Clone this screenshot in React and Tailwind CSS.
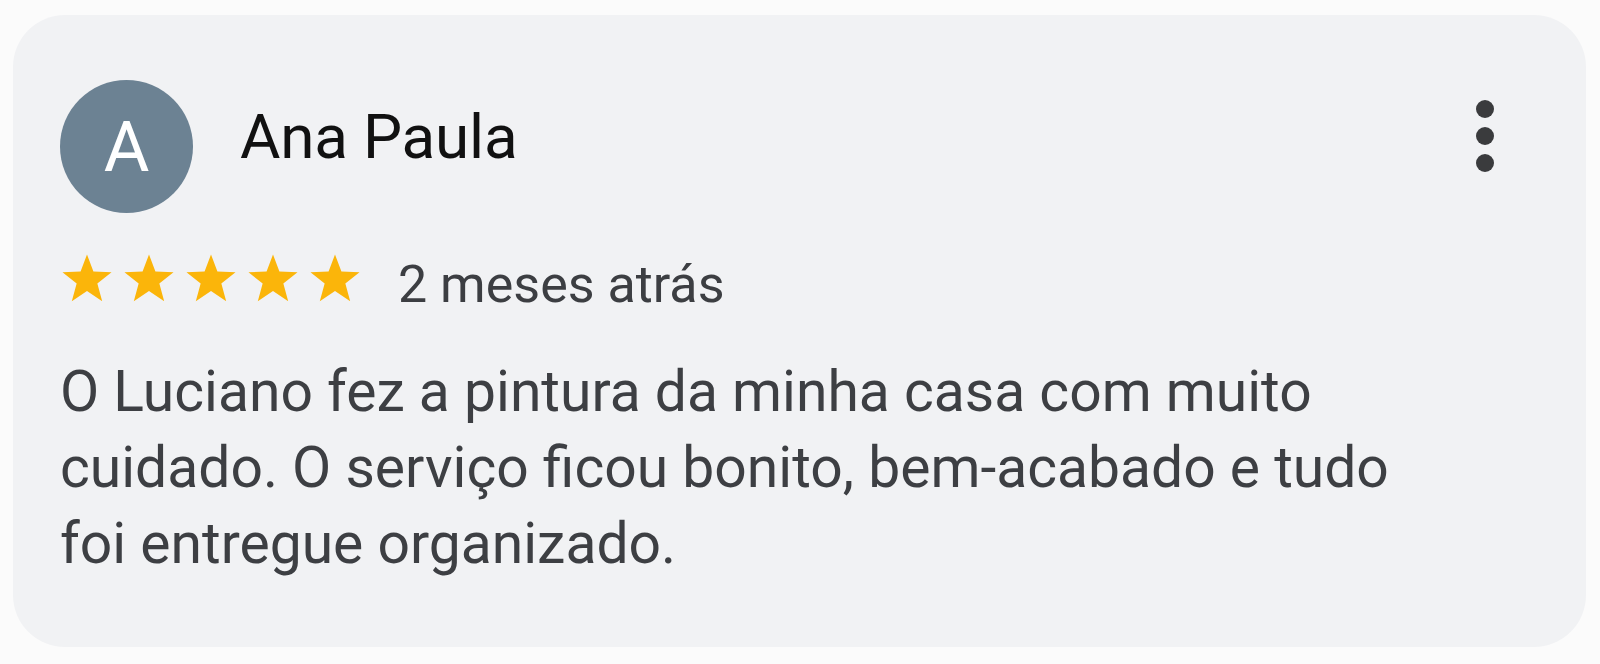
import clsx from 'clsx'

// ── Star ──────────────────────────────────────────────────────────────────────
function Star({ className }) {
  return (
    <svg className={clsx('block', className)} viewBox="0 0 24 23" fill="#fbb50a">
      <path d="M12 0.6l2.85 7.55 8.05 0.35-6.3 5.05 2.15 7.8L12 16.85 5.25 21.35l2.15-7.8L1.1 8.5l8.05-0.35z" />
    </svg>
  )
}

// ── Kebab ─────────────────────────────────────────────────────────────────────
function Kebab() {
  return (
    <div className="flex flex-col gap-[9px]">
      <span className="block w-[18px] h-[18px] rounded-full bg-[#3a3b3d]" />
      <span className="block w-[18px] h-[18px] rounded-full bg-[#3a3b3d]" />
      <span className="block w-[18px] h-[18px] rounded-full bg-[#3a3b3d]" />
    </div>
  )
}

export default function App() {
  return (
    <div className="w-[1600px] h-[664px] bg-[#fbfbfb] pt-[15px] pl-[13px] pr-[14px] font-['Roboto',sans-serif]">
      <div className="h-[632px] rounded-[52px] bg-[#f1f2f4] pl-[47px] pr-[92px] pt-[65px]">
        {/* header */}
        <div className="flex items-start">
          <div className="w-[133px] h-[133px] rounded-full bg-[#6c8293] flex items-center justify-center shrink-0">
            <span className="text-white text-[70px] leading-none">A</span>
          </div>
          <div className="ml-[47px] mt-[26px] text-[62px] leading-[62px] text-[#111111] tracking-[-0.2px]">
            Ana Paula
          </div>
          <div className="ml-auto mt-[20px]">
            <Kebab />
          </div>
        </div>

        {/* rating */}
        <div className="flex items-start mt-[40px]">
          <div className="flex gap-[8px]">
            {[0, 1, 2, 3, 4].map(i => (
              <Star key={i} className="w-[54px] h-[52px]" />
            ))}
          </div>
          <span className="ml-[36px] mt-[6px] text-[52px] leading-[52px] text-[#3c3e42]">2 meses atrás</span>
        </div>

        {/* body */}
        <p className="mt-[43px] max-w-[1400px] text-[57px] leading-[76px] text-[#3d3f43]">
          O Luciano fez a pintura da minha casa com muito cuidado. O serviço ficou bonito, bem-acabado e tudo foi entregue organizado.
        </p>
      </div>
    </div>
  )
}
